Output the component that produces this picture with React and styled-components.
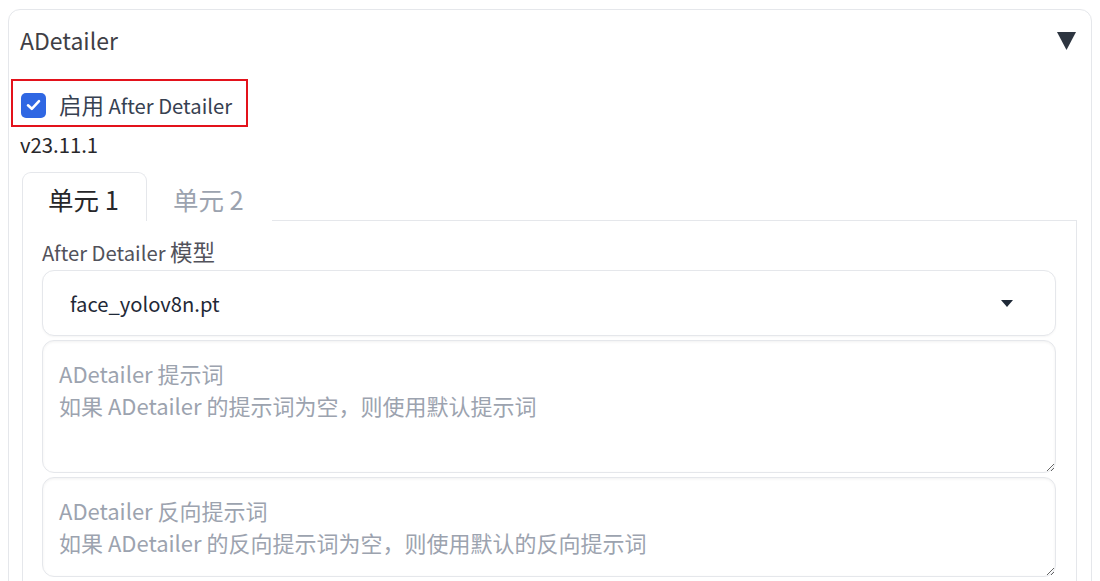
import React from "react";
import styled, { createGlobalStyle } from "styled-components";

const Global = createGlobalStyle`
  html, body { margin: 0; padding: 0; background: #ffffff; }
  body { font-family: "Noto Sans CJK SC", "Noto Sans", sans-serif; color: #1f2937; overflow: hidden; }
  * { box-sizing: border-box; }
`;

const Page = styled.div`
  padding: 9px 8px 0 8px;
`;

const Panel = styled.div`
  border: 1px solid #e5e7eb;
  border-radius: 12px;
  padding: 12px 11px 0 11px;
  min-height: 640px;
  background: #fff;
`;

const Header = styled.div`
  display: flex;
  align-items: center;
  justify-content: space-between;
  height: 36px;
`;

const Title = styled.span`
  font-size: 23px;
  line-height: 36px;
  color: #3f3f46;
`;

const Caret = styled.svg`
  display: block;
  margin-right: 4px;
  margin-top: 1px;
`;

const Latin = styled.span`
  font-size: 0.9em;
`;

const Highlight = styled.div`
  display: inline-flex;
  align-items: center;
  margin: 21px 0 0 -9px;
  padding: 10px 14px 6px 8px;
  border: 2px solid #e3121b;
`;

const CheckRow = styled.label`
  display: flex;
  align-items: center;
  gap: 13px;
`;

const Box = styled.span`
  width: 25px;
  height: 25px;
  border-radius: 5px;
  background: #2f67e3;
  display: flex;
  align-items: center;
  justify-content: center;
`;

const CheckLabel = styled.span`
  font-size: 22.5px;
  line-height: 27px;
  color: #374151;
`;

const Version = styled.div`
  font-size: 20.3px;
  line-height: 28px;
  color: #27272a;
  margin-top: 3px;
`;

const Tabs = styled.div`
  margin: 14px 3px 0 2px;
`;

const TabBar = styled.div`
  display: flex;
  align-items: flex-end;
`;

const Tab = styled.div`
  height: 49px;
  padding: 2px 27px 0 25px;
  display: flex;
  align-items: center;
  font-size: 25.5px;
  color: ${(p) => (p.$active ? "#27272a" : "#9ca3af")};
  border: 1px solid ${(p) => (p.$active ? "#e5e7eb" : "transparent")};
  border-bottom: none;
  border-radius: 9px 9px 0 0;
  background: #fff;
`;

const TabFill = styled.div`
  flex: 1;
  border-bottom: 1px solid #e5e7eb;
`;

const TabBody = styled.div`
  border: 1px solid #e5e7eb;
  border-top: none;
  padding: 15px 20px 20px 19px;
  min-height: 420px;
`;

const FieldLabel = styled.div`
  font-size: 22.5px;
  line-height: 30px;
  color: #52525b;
  margin-bottom: 2px;
`;

const Select = styled.div`
  height: 66px;
  border: 1px solid #e5e7eb;
  border-radius: 12px;
  box-shadow: 0 1px 2px rgba(0, 0, 0, 0.04);
  display: flex;
  align-items: center;
  justify-content: space-between;
  padding: 0 42px 0 27px;
  font-size: 20.2px;
  color: #1f2937;
  background: #fff;
`;

const Area = styled.textarea`
  display: block;
  width: 100%;
  height: ${(p) => p.$h}px;
  margin-top: 4px;
  border: 1px solid #e5e7eb;
  border-radius: 12px;
  box-shadow: inset 0 1px 3px rgba(0, 0, 0, 0.06);
  padding: 16px 16px;
  font-family: "Noto Sans CJK SC", "Noto Sans", sans-serif;
  font-size: 22px;
  line-height: 32px;
  color: #1f2937;
  background: #fff;
  resize: vertical;
  outline: none;
  &::placeholder { color: #9ca3af; }
`;

export default function App() {
  return (
    <>
      <Global />
      <Page>
        <Panel>
          <Header>
            <Title>ADetailer</Title>
            <Caret width="19" height="18" viewBox="0 0 19 18">
              <polygon points="0,0 19,0 9.5,18" fill="#2d3540" />
            </Caret>
          </Header>
          <Highlight>
            <CheckRow>
              <Box>
                <svg width="15" height="12" viewBox="0 0 15 12">
                  <path d="M2 6.3 L5.8 9.8 L13 2.2" fill="none" stroke="#fff" strokeWidth="2.6" strokeLinecap="round" strokeLinejoin="round" />
                </svg>
              </Box>
              <CheckLabel>
                启用<Latin> After Detailer</Latin>
              </CheckLabel>
            </CheckRow>
          </Highlight>
          <Version>v23.11.1</Version>
          <Tabs>
            <TabBar>
              <Tab $active>单元 1</Tab>
              <Tab>单元 2</Tab>
              <TabFill />
            </TabBar>
            <TabBody>
              <FieldLabel>
                <Latin>After Detailer </Latin>模型
              </FieldLabel>
              <Select>
                <span>face_yolov8n.pt</span>
                <svg width="12" height="7" viewBox="0 0 12 7">
                  <polygon points="0,0 12,0 6,7" fill="#1f2937" />
                </svg>
              </Select>
              <Area $h={133} placeholder={"ADetailer 提示词\n如果 ADetailer 的提示词为空，则使用默认提示词"} />
              <Area $h={100} placeholder={"ADetailer 反向提示词\n如果 ADetailer 的反向提示词为空，则使用默认的反向提示词"} />
            </TabBody>
          </Tabs>
        </Panel>
      </Page>
    </>
  );
}
